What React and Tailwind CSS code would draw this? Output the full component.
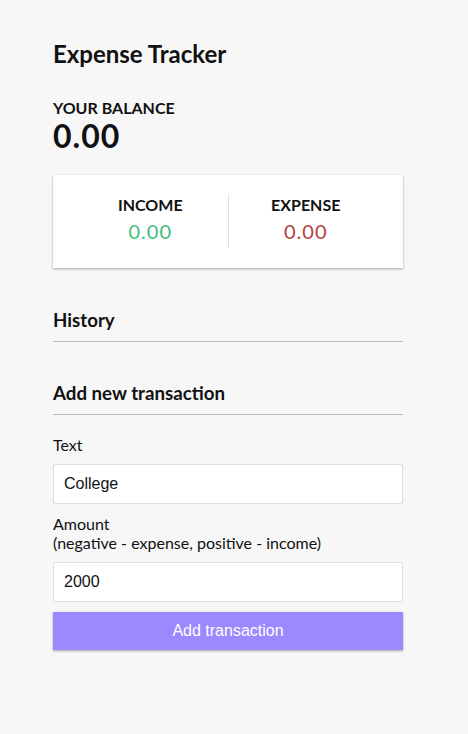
import { useState } from "react";

function App() {
  const [text, setText] = useState("College");
  const [amount, setAmount] = useState("2000");

  return (
    <div className="min-h-screen bg-[#f7f7f7] font-['Lato',sans-serif] text-[#111]">
      <div className="ml-[53px] w-[350px] pt-[40px]">
        {/* Header */}
        <h2 className="text-[24px] font-bold leading-[28.8px]">Expense Tracker</h2>

        {/* Balance */}
        <h4 className="mt-[29px] text-[16px] font-bold uppercase leading-[19.2px]">Your Balance</h4>
        <h1 className="text-[32px] font-bold leading-[38.4px] tracking-[1px]">0.00</h1>

        {/* Income / Expense */}
        <div className="mt-[20px] flex bg-white p-[20px] shadow-[0_1px_3px_rgba(0,0,0,0.12),0_1px_2px_rgba(0,0,0,0.24)]">
          <div className="flex-1 border-r border-[#dedede] text-center">
            <h4 className="text-[16px] font-bold uppercase leading-[19.2px]">Income</h4>
            <p className="my-[5px] text-[20px] leading-[23px] tracking-[1px] text-[#44c07a]">0.00</p>
          </div>
          <div className="flex-1 text-center">
            <h4 className="text-[16px] font-bold uppercase leading-[19.2px]">Expense</h4>
            <p className="my-[5px] text-[20px] leading-[23px] tracking-[1px] text-[#b2433b]">0.00</p>
          </div>
        </div>

        {/* History */}
        <h3 className="mt-[41px] border-b border-[#bbb] pb-[10px] text-[18.72px] font-bold leading-[22px]">
          History
        </h3>
        <ul className="mb-[40px] mt-[10px]"></ul>

        {/* Add new transaction */}
        <h3 className="border-b border-[#bbb] pb-[10px] text-[18.72px] font-bold leading-[22px]">
          Add new transaction
        </h3>
        <form className="mt-[10px]" onSubmit={(e) => e.preventDefault()}>
          <div>
            <label className="my-[10px] inline-block text-[16px] leading-[19.2px]">Text</label>
            <input
              type="text"
              value={text}
              onChange={(e) => setText(e.target.value)}
              className="block h-[40px] w-full rounded-[2px] border border-[#dedede] bg-white px-[10px] font-['Liberation_Sans',Arial,sans-serif] text-[16px] text-[#111] outline-none"
            />
          </div>
          <div>
            <label className="my-[10px] inline-block text-[16px] leading-[19.2px]">
              Amount <br />
              (negative - expense, positive - income)
            </label>
            <input
              type="number"
              value={amount}
              onChange={(e) => setAmount(e.target.value)}
              className="block h-[40px] w-full rounded-[2px] border border-[#dedede] bg-white px-[10px] font-['Liberation_Sans',Arial,sans-serif] text-[16px] text-[#111] outline-none"
            />
          </div>
          <button
            type="submit"
            className="mb-[30px] mt-[10px] block h-[38px] w-full cursor-pointer bg-[#9c88ff] font-['Liberation_Sans',Arial,sans-serif] text-[16px] text-white shadow-[0_1px_3px_rgba(0,0,0,0.12),0_1px_2px_rgba(0,0,0,0.24)]"
          >
            Add transaction
          </button>
        </form>
      </div>
    </div>
  );
}

export default App;
